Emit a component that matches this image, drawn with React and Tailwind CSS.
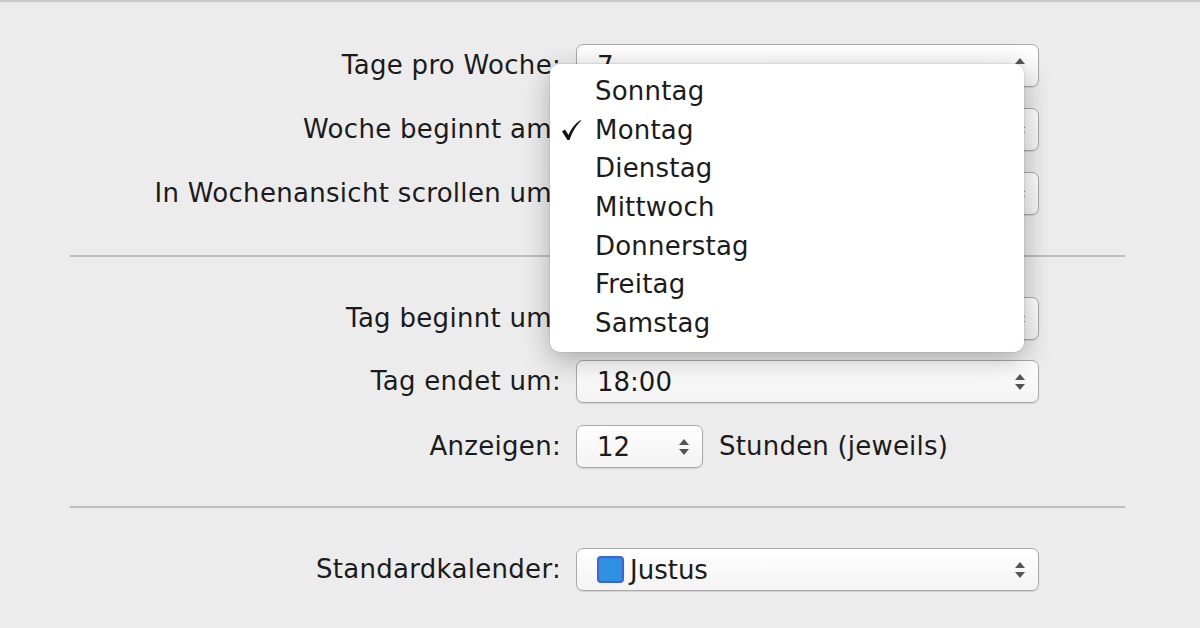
const font = { fontFamily: '"DejaVu Sans", "Lucida Grande", Verdana, sans-serif' };

// Up / down arrows on the right side of a popup button
const Stepper = ({ onlyUp = false }) => (
  <svg width="12" height="20" viewBox="0 0 12 20" className="shrink-0">
    <path d="M6 2 L11 8 L1 8 Z" fill="#555" />
    {!onlyUp && <path d="M6 18 L11 12 L1 12 Z" fill="#555" />}
  </svg>
);

const Check = () => (
  <svg width="22" height="22" viewBox="0 0 22 22">
    <path d="M2 12.5 L5 10.5 L8.5 16 C11 10 15 4.5 20.5 1 L21 2 C16 6.5 12.5 12.5 9.5 21 L7.5 21 Z" fill="#111" />
  </svg>
);

const PopUp = ({ children, width = "w-[463px]", onlyUp }) => (
  <div
    className={`${width} h-[43px] shrink-0 flex items-center justify-between pl-[20px] pr-[12px] rounded-[7px] border border-[#a9a9a9] bg-gradient-to-b from-white to-[#f3f3f3] shadow-[0_1px_1px_rgba(0,0,0,0.12)] text-[26px] text-[#1b1b1b]`}
  >
    <div className="flex items-center gap-[6px] leading-none">{children}</div>
    <Stepper onlyUp={onlyUp} />
  </div>
);

const Row = ({ label, children, className = "" }) => (
  <div className={`flex items-center h-[43px] ${className}`}>
    <div className="w-[562px] shrink-0 text-right text-[26px] tracking-[0.3px] text-[#1b1b1b] whitespace-nowrap pr-[1px]">
      {label}
    </div>
    <div className="ml-[14px] flex items-center">{children}</div>
  </div>
);

const Separator = () => <div className="ml-[70px] mr-[75px] h-[2px] bg-[#bdbdbd]" />;

const days = ["Sonntag", "Montag", "Dienstag", "Mittwoch", "Donnerstag", "Freitag", "Samstag"];

export default function App() {
  return (
    <div
      className="relative w-[1200px] h-[628px] overflow-hidden bg-[#ececec] border-t-2 border-[#c9c9c9]"
      style={font}
    >
      <div className="pt-[42px]">
        <Row label="Tage pro Woche:">
          <PopUp onlyUp>7</PopUp>
        </Row>
        {/* values of these two are hidden under the open menu */}
        <Row label="Woche beginnt am:" className="mt-[21px]">
          <PopUp />
        </Row>
        <Row label="In Wochenansicht scrollen um:" className="mt-[21px]">
          <PopUp />
        </Row>

        <div className="h-[40px]" />
        <Separator />
        <div className="h-[40px]" />

        <Row label="Tag beginnt um:">
          <PopUp />
        </Row>
        <Row label="Tag endet um:" className="mt-[20px]">
          <PopUp>18:00</PopUp>
        </Row>
        <Row label="Anzeigen:" className="mt-[22px]">
          <PopUp width="w-[127px]">12</PopUp>
          <span className="ml-[16px] text-[26px] tracking-[0.2px] text-[#1b1b1b] whitespace-nowrap">Stunden (jeweils)</span>
        </Row>

        <div className="h-[38px]" />
        <Separator />
        <div className="h-[40px]" />

        <Row label="Standardkalender:">
          <PopUp>
            <span className="inline-block w-[27px] h-[27px] rounded-[4px] bg-[#2f8fe0] border-2 border-[#3d63d6]" />
            <span>Justus</span>
          </PopUp>
        </Row>
      </div>

      {/* open menu of "Woche beginnt am" */}
      <div className="absolute left-[550px] top-[62px] w-[474px] rounded-[10px] bg-white pt-[8px] pb-[10px] shadow-[0_8px_28px_rgba(0,0,0,0.28),0_0_0_1px_rgba(0,0,0,0.06)]">
        {days.map((d) => (
          <div key={d} className="flex items-center h-[38.6px] text-[26px] tracking-[0.2px] text-[#1b1b1b] leading-none">
            <span className="w-[45px] pl-[10px] flex items-center">{d === "Montag" && <Check />}</span>
            <span>{d}</span>
          </div>
        ))}
      </div>
    </div>
  );
}
